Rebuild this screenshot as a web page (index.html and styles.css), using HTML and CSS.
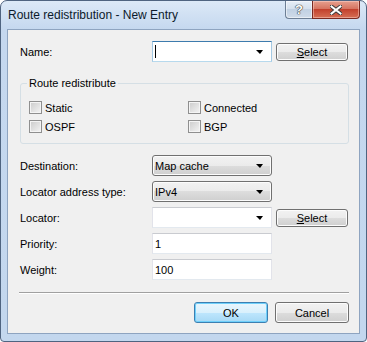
FILE: index.html
```html
<!DOCTYPE html>
<html lang="en">
<head>
  <meta charset="UTF-8">
  <title>Route redistribution - New Entry</title>
  <link rel="stylesheet" href="styles.css">
</head>
<body>
  <div class="window">
    <div class="titlebar">
      <span class="title">Route redistribution - New Entry</span>
      <div class="caption-buttons">
        <div class="cap help"><span>?</span></div>
        <div class="cap close">
          <svg width="12" height="10" viewBox="0 0 12 10">
            <path d="M1.5 1.5 L10.5 8.5 M10.5 1.5 L1.5 8.5" stroke="#3b3b3b" stroke-width="4" stroke-linecap="square"/>
            <path d="M1.5 1.5 L10.5 8.5 M10.5 1.5 L1.5 8.5" stroke="#fff" stroke-width="2" stroke-linecap="square"/>
          </svg>
        </div>
      </div>
    </div>

    <div class="client">
      <div class="form-row name-row">
        <span class="label">Name:</span>
        <div class="edit-combo focused"><span class="caret"></span><span class="arrow"></span></div>
        <div class="btn"><u>S</u>elect</div>
      </div>

      <div class="group">
        <span class="group-title">Route redistribute</span>
        <div class="checks">
          <div class="check"><span class="box"></span>Static</div>
          <div class="check"><span class="box"></span>Connected</div>
          <div class="check"><span class="box"></span>OSPF</div>
          <div class="check"><span class="box"></span>BGP</div>
        </div>
      </div>

      <div class="fields">
        <div class="form-row">
          <span class="label">Destination:</span>
          <div class="dropdown">Map cache<span class="arrow"></span></div>
        </div>
        <div class="form-row">
          <span class="label">Locator address type:</span>
          <div class="dropdown">IPv4<span class="arrow"></span></div>
        </div>
        <div class="form-row">
          <span class="label">Locator:</span>
          <div class="edit-combo"><span class="arrow"></span></div>
          <div class="btn"><u>S</u>elect</div>
        </div>
        <div class="form-row">
          <span class="label">Priority:</span>
          <div class="textbox">1</div>
        </div>
        <div class="form-row">
          <span class="label">Weight:</span>
          <div class="textbox">100</div>
        </div>
      </div>

      <div class="separator"></div>

      <div class="actions">
        <div class="btn default">OK</div>
        <div class="btn">Cancel</div>
      </div>
    </div>
  </div>
</body>
</html>
```

FILE: styles.css
```css
body {
  margin: 0;
  font-family: "Liberation Sans", Arial, sans-serif;
  font-size: 11px;
  color: #000;
}

.window {
  width: 367px;
  height: 342px;
  box-sizing: border-box;
  border: 1px solid #4f6480;
  border-radius: 7px 7px 4px 4px;
  background: linear-gradient(#dce9f7, #c5d8ef 28px, #c3d7ee);
  display: flex;
  flex-direction: column;
}

.titlebar {
  height: 28px;
  display: flex;
  align-items: flex-start;
  padding: 0 6px 0 7px;
}

.title {
  margin-top: 7px;
  font-size: 12px;
  line-height: 15px;
  color: #0c1a2b;
}

.caption-buttons {
  margin-left: auto;
  display: flex;
}

.cap {
  height: 18px;
  box-sizing: border-box;
  display: flex;
  justify-content: center;
  align-items: center;
  border: 1px solid #6d7f95;
  border-top: none;
}

.help {
  width: 27px;
  border-right: none;
  border-radius: 0 0 0 4px;
  background: linear-gradient(#e7eef7, #d3dfec 50%, #c1d1e3 50%, #cfdbe9);
  box-shadow: inset 0 0 0 1px rgba(255, 255, 255, 0.5);
}

.help span {
  font-size: 13px;
  font-weight: bold;
  color: #fff;
  text-shadow: 0 0 1px #333, 0 0 1px #333, 0 0 1px #333;
}

.close {
  width: 48px;
  border-color: #7a2a22;
  border-radius: 0 0 4px 0;
  background: linear-gradient(#e6a08f, #d4705c 50%, #c2412d 50%, #d66f55);
  box-shadow: inset 0 0 0 1px rgba(255, 220, 210, 0.45);
}

.client {
  margin: 0 6px 7px 6px;
  height: 305px;
  box-sizing: border-box;
  border: 1px solid #8ea4c0;
  background: #f0f0f0;
  padding: 0 10px 0 12px;
}

.form-row {
  display: grid;
  grid-template-columns: 128px 120px 72px;
  column-gap: 4px;
  align-items: center;
  height: 21px;
}

.name-row {
  margin-top: 11px;
}

.label {
  line-height: 14px;
}

.edit-combo,
.textbox,
.dropdown {
  height: 21px;
  box-sizing: border-box;
  position: relative;
  display: flex;
  align-items: center;
  padding-left: 2px;
}

.edit-combo,
.textbox {
  background: #fff;
  border: 1px solid;
  border-color: #c9cbd0 #e2e3ea #e3e9ef #e2e3ea;
}

.edit-combo.focused {
  border-color: #3d7bad #a4c9e3 #b7d9ed #a4c9e3;
}

.caret {
  width: 1px;
  height: 13px;
  background: #000;
}

.dropdown {
  border: 1px solid #707070;
  border-radius: 3px;
  background: linear-gradient(#f2f2f2, #ebebeb 50%, #dddddd 50%, #cfcfcf);
  box-shadow: inset 0 0 0 1px #fcfcfc;
}

.arrow {
  position: absolute;
  right: 8px;
  top: 8px;
  width: 0;
  height: 0;
  border-left: 4px solid transparent;
  border-right: 3px solid transparent;
  border-top: 4px solid #000;
}

.btn {
  height: 18px;
  box-sizing: border-box;
  border: 1px solid #707070;
  border-radius: 3px;
  background: linear-gradient(#f2f2f2, #ebebeb 50%, #dddddd 50%, #cfcfcf);
  box-shadow: inset 0 0 0 1px #fcfcfc;
  display: flex;
  justify-content: center;
  align-items: center;
}

.group {
  position: relative;
  margin-top: 21px;
  width: 329px;
  height: 61px;
  box-sizing: border-box;
  border: 1px solid #d5dfe5;
  border-radius: 3px;
  padding: 17px 0 0 8px;
}

.group-title {
  position: absolute;
  top: -8px;
  left: 6px;
  padding: 0 2px;
  background: #f0f0f0;
  line-height: 14px;
}

.checks {
  display: grid;
  grid-template-columns: 159px 140px;
  row-gap: 6px;
}

.check {
  display: flex;
  align-items: center;
  gap: 3px;
  height: 13px;
}

.box {
  width: 13px;
  height: 13px;
  box-sizing: border-box;
  border: 1px solid #8f8f8f;
  background: linear-gradient(135deg, #cbcbcb, #f4f4f4);
  box-shadow: inset 0 0 0 1px #f4f4f4;
}

.fields {
  margin-top: 11px;
  display: flex;
  flex-direction: column;
  gap: 5px;
}

.separator {
  margin: 12px 0 0 -1px;
  width: 330px;
  height: 1px;
  background: #a0a0a0;
  border-bottom: 1px solid #fff;
}

.actions {
  margin-top: 8px;
  display: flex;
  justify-content: flex-end;
  gap: 7px;
}

.actions .btn {
  width: 74px;
  height: 21px;
}

.btn.default {
  border-color: #3c7fb1;
  background: linear-gradient(#eaf6fd, #d9f0fc 50%, #bee6fd 50%, #a7d9f5);
  box-shadow: inset 0 0 0 1px #6fd0fb;
}
```
